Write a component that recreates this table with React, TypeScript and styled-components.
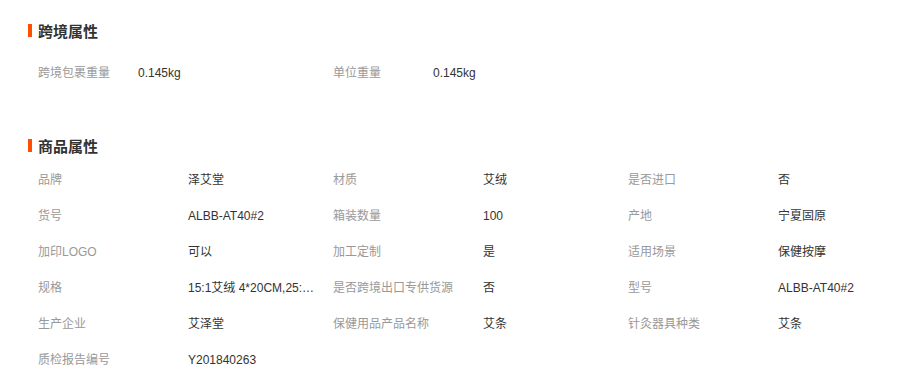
import styled, { createGlobalStyle } from 'styled-components'

const GlobalStyle = createGlobalStyle`
  html, body {
    margin: 0;
    padding: 0;
    background: #fff;
  }
  body {
    font-family: "Liberation Sans", "Noto Sans CJK SC", sans-serif;
    font-size: 12px;
    color: #333;
  }
`;

const Page = styled.div`
  width: 903px;
  padding-top: 18px;
`;

const Section = styled.section<{ $gap: number }>`
  margin-bottom: ${props => props.$gap}px;
`;

const Title = styled.h2`
  display: flex;
  align-items: center;
  margin: 0;
  padding-left: 28px;
  height: 24px;
  font-size: 15px;
  font-weight: bold;
  color: #333;
  &::before {
    content: '';
    width: 4px;
    height: 13px;
    margin-right: 6px;
    background: #ff5000;
  }
`;

const AttrList = styled.ul<{ $top: number }>`
  list-style: none;
  margin: ${props => props.$top}px 0 0;
  padding: 0 0 0 38px;
  display: grid;
  grid-template-columns: repeat(3, 295px);
`;

const Attr = styled.li<{ $labelWidth: number }>`
  display: flex;
  align-items: center;
  height: 36px;
  line-height: 36px;
  span:first-child {
    flex: 0 0 ${props => props.$labelWidth}px;
    color: #999;
    white-space: nowrap;
  }
`;

const Value = styled.span`
  flex: 0 0 128px;
  color: #333;
  white-space: nowrap;
  overflow: hidden;
  text-overflow: ellipsis;
`;

type Pair = [string, string];

const crossBorder: Pair[] = [
  ['跨境包裹重量', '0.145kg'],
  ['单位重量', '0.145kg'],
];

const goods: Pair[] = [
  ['品牌', '泽艾堂'],
  ['材质', '艾绒'],
  ['是否进口', '否'],
  ['货号', 'ALBB-AT40#2'],
  ['箱装数量', '100'],
  ['产地', '宁夏固原'],
  ['加印LOGO', '可以'],
  ['加工定制', '是'],
  ['适用场景', '保健按摩'],
  ['规格', '15:1艾绒 4*20CM,25:1艾绒 4*20CM'],
  ['是否跨境出口专供货源', '否'],
  ['型号', 'ALBB-AT40#2'],
  ['生产企业', '艾泽堂'],
  ['保健用品产品名称', '艾条'],
  ['针灸器具种类', '艾条'],
  ['质检报告编号', 'Y201840263'],
];

const App = () => {
  return (
    <Page>
      <GlobalStyle />
      <Section $gap={42}>
        <Title>跨境属性</Title>
        <AttrList $top={13}>
          {crossBorder.map(([k, v]) => (
            <Attr key={k} $labelWidth={100}>
              <span>{k}</span>
              <Value>{v}</Value>
            </Attr>
          ))}
        </AttrList>
      </Section>
      <Section $gap={0}>
        <Title>商品属性</Title>
        <AttrList $top={5}>
          {goods.map(([k, v]) => (
            <Attr key={k} $labelWidth={150}>
              <span>{k}</span>
              <Value>{v}</Value>
            </Attr>
          ))}
        </AttrList>
      </Section>
    </Page>
  )
}

export default App
